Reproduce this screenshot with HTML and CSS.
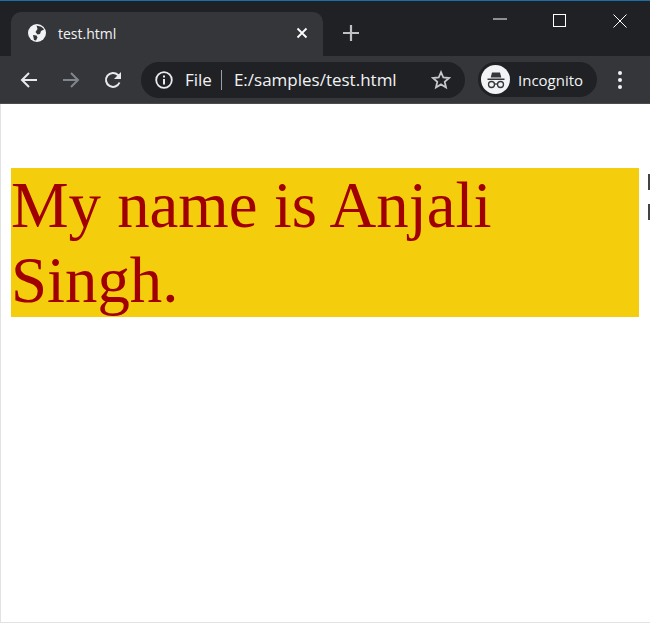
FILE: index.html
```html
<!DOCTYPE html>
<html>
<head>
  <meta charset="utf-8">
  <title>test.html</title>
  <link rel="stylesheet" href="styles.css">
</head>
<body>
  <div class="window">
    <div class="tab-strip">
      <div class="tab">
        <svg class="tab-globe" viewBox="0 0 18 18"><circle cx="9" cy="9" r="9" fill="#f1f3f4"/><path d="M8.500 1.500c2 .5 6 1 7.500 4l-3 1.500-1 3-2.500.5-2-2.500L9.500 5zM5 11l3.500 .5 1 2-1.500 3L6 16z" fill="#35363a"/></svg>
        <span class="tab-title">test.html</span>
        <svg class="tab-close" viewBox="0 0 12 12"><path d="M1.500 1.500l9 9M10.500 1.500l-9 9" stroke="#fff" stroke-width="1.800"/></svg>
      </div>
      <svg class="new-tab" viewBox="0 0 16 16"><path d="M8 0v16M0 8h16" stroke="#bdc1c6" stroke-width="2.200"/></svg>
      <div class="window-controls">
        <svg class="win-btn" viewBox="0 0 14 14"><path d="M0 5h14" stroke="#fff" stroke-width="1"/></svg>
        <svg class="win-btn" viewBox="0 0 14 14"><rect x="0.500" y="0.500" width="12" height="12" fill="none" stroke="#fff" stroke-width="1"/></svg>
        <svg class="win-btn" viewBox="0 0 14 14"><path d="M0.500 0.500l13 13M13.500 0.500l-13 13" stroke="#fff" stroke-width="1"/></svg>
      </div>
    </div>

    <div class="toolbar">
      <svg class="nav-icon" viewBox="0 0 18 18"><path d="M17 9H2M9 2 2 9l7 7" fill="none" stroke="#e8eaed" stroke-width="2"/></svg>
      <svg class="nav-icon" viewBox="0 0 18 18"><path d="M1 9h15M9 2l7 7-7 7" fill="none" stroke="#80868b" stroke-width="2"/></svg>
      <svg class="nav-icon" viewBox="0 0 18 18"><path d="M15.500 11.500A7 7 0 1 1 14 4l1.500 1.500" fill="none" stroke="#e8eaed" stroke-width="2"/><path d="M17 1v7h-7z" fill="#e8eaed"/></svg>
      <div class="omnibox">
        <svg class="info-icon" viewBox="0 0 18 18"><circle cx="9" cy="9" r="7.800" fill="none" stroke="#e8eaed" stroke-width="1.800"/><path d="M8 8h2v5.500H8zM8 4.500h2v2H8z" fill="#e8eaed"/></svg>
        <span class="scheme">File</span>
        <span class="divider"></span>
        <span class="url">E:/samples/test.html</span>
        <svg class="star" viewBox="0 0 20 20"><path d="M10 2.200l2.300 5.300 5.700.5-4.300 3.800 1.300 5.600-5-3-5 3 1.300-5.600L2 8l5.700-.5z" fill="none" stroke="#c4c7cb" stroke-width="1.800"/></svg>
      </div>
      <div class="profile">
        <span class="avatar">
          <svg viewBox="0 0 24 24"><path d="M8 4.500h8l1.300 5H6.700zM3.500 10.500h17V12h-17z" fill="#35363a"/><circle cx="7.500" cy="16.500" r="3" fill="none" stroke="#35363a" stroke-width="1.300"/><circle cx="16.500" cy="16.500" r="3" fill="none" stroke="#35363a" stroke-width="1.300"/><path d="M10.500 16h3" stroke="#35363a" stroke-width="1.300"/></svg>
        </span>
        <span class="profile-name">Incognito</span>
      </div>
      <div class="menu-dots"><span></span><span></span><span></span></div>
    </div>

    <div class="page">
      <h1 class="banner">My name is Anjali Singh.</h1>
      <span class="edge-mark edge-top"></span>
      <span class="edge-mark edge-bottom"></span>
    </div>
  </div>
</body>
</html>
```

FILE: styles.css
```css
html, body {
  margin: 0;
  padding: 0;
  height: 100%;
  overflow: hidden;
}
body {
  font-family: "Open Sans", "Noto Sans", sans-serif;
  background-color: #fff;
}
.window {
  display: flex;
  flex-direction: column;
  height: 623px;
  box-sizing: border-box;
  border-top: 1px solid #1a6fa8;
}
.tab-strip {
  display: flex;
  align-items: flex-end;
  height: 55px;
  padding-left: 11px;
  background-color: #202124;
  position: relative;
}
.tab {
  display: flex;
  align-items: center;
  width: 312px;
  height: 44px;
  box-sizing: border-box;
  padding: 0 15px 2px 17px;
  background-color: #35363a;
  border-radius: 10px 10px 0 0;
}
.tab-globe {
  width: 18px;
  height: 18px;
  margin-right: 12px;
}
.tab-title {
  flex: 1;
  font-size: 14px;
  color: #f1f3f4;
}
.tab-close {
  width: 12px;
  height: 12px;
}
.new-tab {
  width: 16px;
  height: 16px;
  margin: 0 0 15px 20px;
}
.window-controls {
  display: flex;
  gap: 46px;
  position: absolute;
  top: 13px;
  right: 23px;
}
.win-btn {
  width: 14px;
  height: 14px;
}
.toolbar {
  display: flex;
  align-items: center;
  height: 48px;
  box-sizing: border-box;
  padding: 0 0 0 20px;
  background-color: #35363a;
  border-bottom: 1px solid #4a4b4f;
}
.nav-icon {
  width: 18px;
  height: 18px;
  margin-right: 24px;
}
.nav-icon:nth-child(3) {
  margin-right: 19px;
}
.omnibox {
  display: flex;
  align-items: center;
  width: 324px;
  height: 36px;
  box-sizing: border-box;
  padding: 0 14px;
  background-color: #202124;
  border-radius: 18px;
}
.info-icon {
  width: 18px;
  height: 18px;
  margin-right: 12px;
}
.scheme {
  font-size: 17px;
  color: #f1f3f4;
}
.divider {
  width: 1px;
  height: 20px;
  margin: 0 12px 0 9px;
  background-color: #9aa0a6;
}
.url {
  flex: 1;
  font-size: 17px;
  color: #f1f3f4;
}
.star {
  width: 20px;
  height: 20px;
}
.profile {
  display: flex;
  align-items: center;
  width: 119px;
  height: 35px;
  box-sizing: border-box;
  margin-left: 13px;
  padding-left: 2px;
  background-color: #202124;
  border-radius: 18px;
}
.avatar {
  display: flex;
  align-items: center;
  justify-content: center;
  width: 29px;
  height: 29px;
  margin-left: 1px;
  border-radius: 50%;
  background-color: #f1f3f4;
}
.avatar svg {
  width: 24px;
  height: 24px;
}
.profile-name {
  margin-left: 8px;
  font-size: 15px;
  color: #f1f3f4;
}
.menu-dots {
  display: flex;
  flex-direction: column;
  gap: 3px;
  margin-left: 21px;
}
.menu-dots span {
  width: 4px;
  height: 4px;
  border-radius: 50%;
  background-color: #f1f3f4;
}
.page {
  flex: 1;
  position: relative;
  padding: 64px 11px 0 10px;
  background-color: #fff;
  border-left: 1px solid #e2e2e2;
  border-bottom: 1px solid #e2e2e2;
}
.banner {
  margin: 0;
  font-family: "Liberation Serif", "Times New Roman", serif;
  font-size: 64.800px;
  font-weight: normal;
  line-height: 74.500px;
  color: #a00000;
  background-color: #f4cd0c;
}
.edge-mark {
  position: absolute;
  right: 0;
  width: 2px;
  height: 16px;
  background-color: #444;
}
.edge-top {
  top: 70px;
}
.edge-bottom {
  top: 100px;
}
```
